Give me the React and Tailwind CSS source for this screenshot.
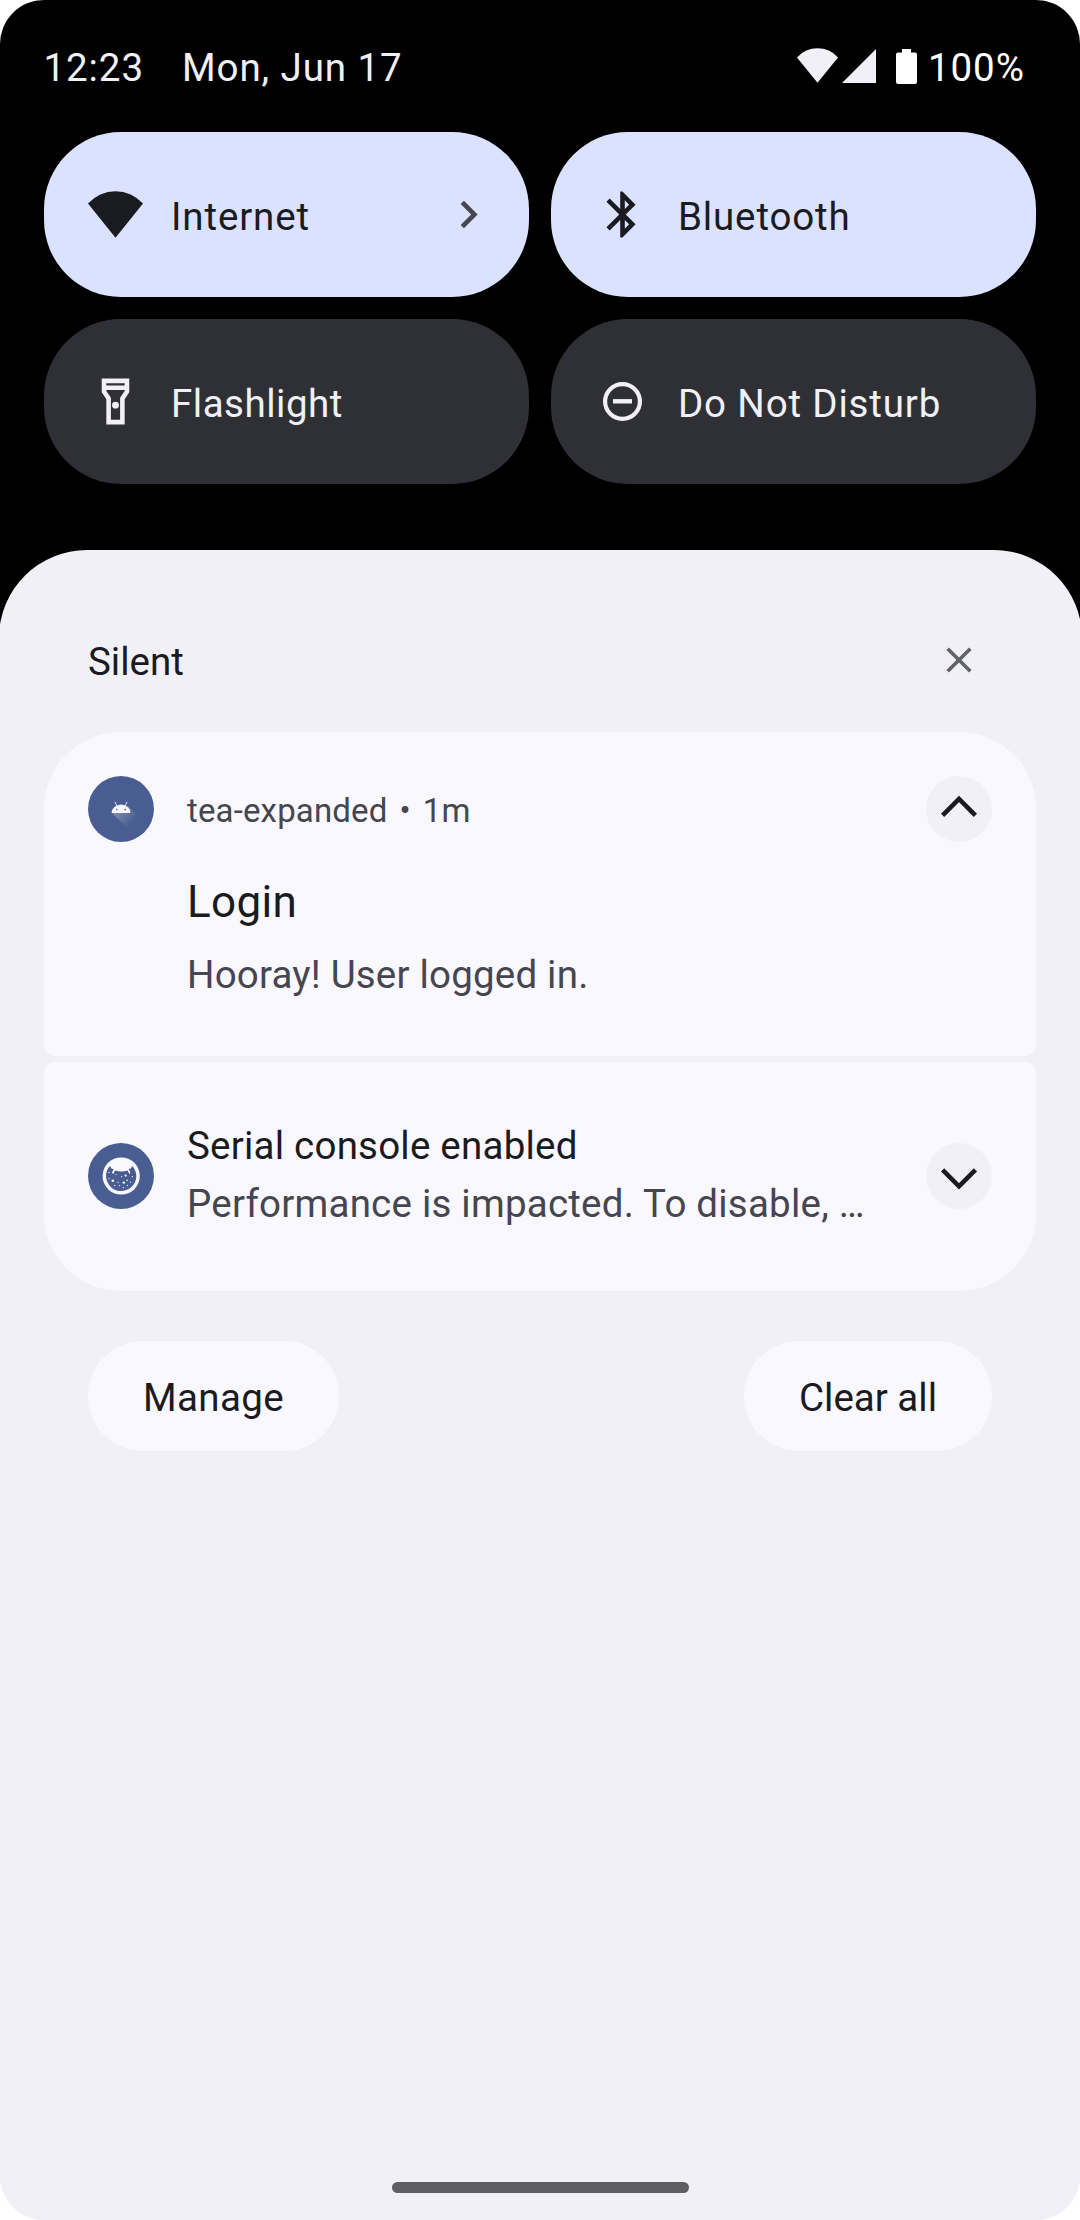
import React from "react";

function WifiIcon({ className }) {
  return (
    <svg viewBox="0 0 54 47" className={className} preserveAspectRatio="none" fill="currentColor">
      <path d="M0 12.6 A35.6 35.6 0 0 1 54 12.6 L27 46.8 Z" />
    </svg>
  );
}

function ChevronRight() {
  return (
    <svg viewBox="0 0 24 24" className="size-[55px] text-[#45464f]" fill="currentColor">
      <path d="M10 6 8.59 7.41 13.17 12l-4.58 4.59L10 18l6-6z" />
    </svg>
  );
}

function BluetoothIcon() {
  return (
    <svg viewBox="0 0 24 24" className="size-[55px]" fill="currentColor">
      <path d="M17.71 7.71 12 2h-1v7.59L6.41 5 5 6.41 10.59 12 5 17.59 6.41 19 11 14.41V22h1l5.71-5.71-4.3-4.29 4.3-4.29zM13 5.83l1.88 1.88L13 9.59V5.83zm1.88 10.46L13 18.17v-3.76l1.88 1.88z" />
    </svg>
  );
}

function FlashlightIcon() {
  return (
    <svg viewBox="0 0 24 24" className="size-[55px]" fill="currentColor">
      <path fillRule="evenodd" d="M18 2H6v6l2 3v11h8V11l2-3V2zm-2 2v1H8V4h8zm-2 6.4V20h-4v-9.61l-2-3V7h8v.39l-2 3.01z" />
      <circle cx="12" cy="13.6" r="1.5" />
    </svg>
  );
}

function DndIcon() {
  return (
    <svg viewBox="0 0 55 55" className="size-[55px]" fill="none" stroke="currentColor" strokeWidth="4.2">
      <circle cx="27.5" cy="27.5" r="17.4" />
      <path d="M18 27.3h19" strokeWidth="4.4" />
    </svg>
  );
}

function Tile({ active, icon, label, chevron, tracking = "tracking-[0.85px]" }) {
  return (
    <div
      className={
        "flex h-[165px] items-center rounded-[77px] pl-[44px] pr-[33px] " +
        (active ? "bg-[#dae2ff] text-[#1a1b21]" : "bg-[#2f3036] text-[#f1f0f7]")
      }
    >
      <div className="flex size-[55px] items-center justify-center">{icon}</div>
      <span className={"ml-7 flex-1 pt-[5px] text-[38.5px] leading-[46px] " + tracking}>{label}</span>
      {chevron && <ChevronRight />}
    </div>
  );
}

function ExpandButton({ up }) {
  return (
    <div className="flex size-[66px] shrink-0 items-center justify-center rounded-full bg-[#f1f0f7]">
      <svg viewBox="0 0 66 66" className="size-[66px]" fill="none" stroke="#1a1b21" strokeWidth="4.6">
        {up ? <path d="M16.6 39.3 33 22.9 49.4 39.3" /> : <path d="M16.6 26.9 33 43.3 49.4 26.9" />}
      </svg>
    </div>
  );
}

function AndroidAppIcon() {
  return (
    <svg viewBox="0 0 66 66" className="size-[66px] shrink-0">
      <defs>
        <linearGradient id="head-shadow" gradientUnits="userSpaceOnUse" x1="28" y1="32" x2="43" y2="48">
          <stop offset="0" stopColor="#fff" stopOpacity="0.32" />
          <stop offset="1" stopColor="#fff" stopOpacity="0" />
        </linearGradient>
      </defs>
      <circle cx="33" cy="33" r="33" fill="#495d92" />
      <path d="M23.8 36.8 41 54 54 44 40 30Z" fill="url(#head-shadow)" />
      <path d="M23.6 37a9.45 8.6 0 0 1 18.9 0Z" fill="#faf8ff" />
      <path d="M27 26.2l2.2 4M39 26.2l-2.2 4" stroke="#faf8ff" strokeWidth="0.9" strokeLinecap="round" />
      <circle cx="28.8" cy="33.6" r="0.8" fill="#495d92" />
      <circle cx="37.2" cy="33.6" r="0.8" fill="#495d92" />
    </svg>
  );
}

function SystemIcon() {
  return (
    <svg viewBox="0 0 66 66" className="size-[66px] shrink-0">
      <circle cx="33" cy="33" r="33" fill="#495d92" />
      <circle cx="33.2" cy="33" r="18.6" fill="#faf8ff" />
      <path
        d="M22 22.9 C17.5 27 17 34.5 19.8 39.8 C23 46.3 29 48.6 34 48 C41 47.4 47.2 42.6 48.2 35 C48.8 30.4 47.2 26 44.3 22.9 L42.8 25.4 L40.6 26 L42.4 29.6 L41.4 31 L39.6 27.6 C35.6 28.8 31 28.8 27 27.6 L25.2 31.2 L24 29.6 L25.6 26.2 L23.4 25.4 Z"
        fill="#495d92"
      />
      <g fill="#faf8ff">
        <circle cx="24.8" cy="37.8" r="1.3" />
        <circle cx="35.8" cy="39.6" r="1.2" />
        <circle cx="37.6" cy="32.6" r="1.1" />
        <circle cx="33.5" cy="33.6" r="0.6" />
        <circle cx="39.2" cy="37.2" r="0.8" />
        <circle cx="44.4" cy="33.6" r="0.7" />
        <circle cx="30" cy="39.4" r="0.6" />
        <circle cx="28" cy="31.6" r="0.6" />
        <circle cx="26.8" cy="42.4" r="0.6" />
        <circle cx="31.6" cy="42.6" r="0.6" />
        <circle cx="35.4" cy="44.6" r="0.7" />
        <circle cx="39.4" cy="42.4" r="0.6" />
        <circle cx="42.4" cy="39.2" r="0.6" />
        <circle cx="21" cy="35.6" r="0.7" />
        <circle cx="21" cy="29.4" r="0.7" />
      </g>
    </svg>
  );
}

export default function App() {
  return (
    <div className="w-[1080px] bg-white font-[Roboto,sans-serif]">
      <div className="flex h-[2220px] flex-col overflow-hidden rounded-[44px] bg-[#f1f0f7]">
        {/* The black area runs on behind the rounded top corners of the shade. */}
        <div className="-mb-[90px] h-[640px] shrink-0 bg-black pt-[44px]">
          <header className="flex h-12 items-center pl-[43.5px] text-[38.5px] leading-[48px] tracking-[0.92px] text-[#f1f0f7]">
            <span className="whitespace-nowrap">12:23</span>
            <span className="ml-[38px] whitespace-nowrap">Mon, Jun 17</span>
            <div className="ml-auto flex h-12 w-[283px] items-center">
              <WifiIcon className="mb-[6px] h-[35px] w-[41px]" />
              <svg viewBox="0 0 34 34" className="mb-[5px] ml-1 h-[34px] w-[34px]" fill="currentColor">
                <path d="M34 0V34H0Z" />
              </svg>
              <svg viewBox="0 0 21 35" className="mb-[4px] ml-5 h-[35px] w-[21px]" fill="#fff">
                <path d="M6 0h9v3.6h4a2 2 0 0 1 2 2V33a2 2 0 0 1-2 2H2a2 2 0 0 1-2-2V5.6a2 2 0 0 1 2-2h4z" />
              </svg>
              <span className="ml-[11px] text-white">100%</span>
            </div>
          </header>

          <section className="mt-10 grid grid-cols-2 gap-[22px] px-[44px]">
            <Tile active chevron label="Internet" icon={<WifiIcon className="h-[47px] w-[55px]" />} />
            <Tile active label="Bluetooth" icon={<BluetoothIcon />} />
            <Tile label="Flashlight" tracking="tracking-[0.5px]" icon={<FlashlightIcon />} />
            <Tile label="Do Not Disturb" icon={<DndIcon />} />
          </section>
        </div>

        <main className="-mx-[1.5px] flex flex-1 flex-col rounded-t-[88px] bg-[#f1f0f7] px-[45.5px] pt-10 text-[#1a1b21]">
          <div className="flex h-[142px] shrink-0 items-center justify-between px-[44px]">
            <h2 className="pt-[2px] text-[38.5px] leading-[46px]">Silent</h2>
            <svg viewBox="0 0 66 66" className="mb-[2px] size-[66px]" fill="none" stroke="#5f6368" strokeWidth="3.6">
              <path d="M21.7 21.7 44.3 44.3M44.3 21.7 21.7 44.3" />
            </svg>
          </div>

          <div className="flex flex-col gap-1.5">
            <article className="h-[324px] rounded-t-[77px] rounded-b-[11px] bg-[#faf8ff] px-[44px] pt-[44px]">
              <div className="flex h-[66px] items-center">
                <AndroidAppIcon />
                <div className="ml-[33px] flex flex-1 gap-[12px] pt-[3px] text-[33px] leading-[40px] tracking-[0.15px] text-[#45464f]">
                  <span>tea-expanded</span>
                  <span>•</span>
                  <span>1m</span>
                </div>
                <ExpandButton up />
              </div>
              <h3 className="mt-[34px] ml-[99px] text-[44px] leading-[52px] tracking-[0.3px]">Login</h3>
              <p className="mt-6 ml-[99px] text-[38.5px] leading-[46px] tracking-[0.2px] text-[#45464f]">
                Hooray! User logged in.
              </p>
            </article>

            <article className="flex h-[229px] items-center rounded-t-[11px] rounded-b-[77px] bg-[#faf8ff] px-[44px] pb-px">
              <SystemIcon />
              <div className="ml-[33px] flex-1 pb-[2px] text-[38.5px] leading-[58px] tracking-[0.22px] whitespace-nowrap">
                <h3>Serial console enabled</h3>
                <p className="text-[#45464f]">Performance is impacted. To disable, …</p>
              </div>
              <ExpandButton />
            </article>
          </div>

          <div className="mt-[50px] flex justify-between px-[44px] text-[38.5px] leading-[46px]">
            <button className="h-[110px] w-[251px] rounded-full bg-[#faf8ff] pt-[4px] tracking-[0.4px]">Manage</button>
            <button className="h-[110px] w-[248px] rounded-full bg-[#faf8ff] pt-[4px]">Clear all</button>
          </div>

          <div className="mt-auto mb-[27.5px] h-[11px] w-[297px] self-center rounded-full bg-[#5f5f61]" />
        </main>
      </div>
    </div>
  );
}
